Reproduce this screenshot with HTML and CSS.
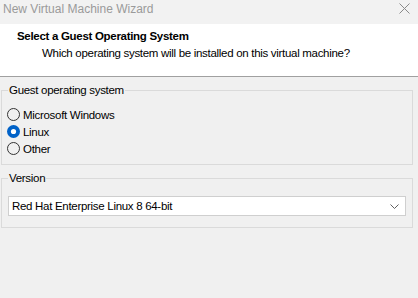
FILE: index.html
```html
<!DOCTYPE html>
<html>
<head>
<meta charset="utf-8">
<link rel="stylesheet" href="styles.css">
</head>
<body>
<div class="window">
  <div class="titlebar">
    <span class="title">New Virtual Machine Wizard</span>
    <svg class="close" width="11" height="11" viewBox="0 0 11 11"><path d="M0.5 0.5L10.5 10.5M10.5 0.5L0.5 10.5" stroke="#8a8a8a" stroke-width="1" fill="none"/></svg>
  </div>
  <div class="header">
    <div class="heading">Select a Guest Operating System</div>
    <div class="subtitle">Which operating system will be installed on this virtual machine?</div>
  </div>
  <div class="content">
    <fieldset class="group">
      <legend>Guest operating system</legend>
      <div class="radios">
        <div class="radio">
          <svg width="13" height="13" viewBox="0 0 13 13"><circle cx="6.5" cy="6.5" r="6" fill="none" stroke="#333" stroke-width="1"/></svg>
          <span>Microsoft Windows</span>
        </div>
        <div class="radio">
          <svg width="13" height="13" viewBox="0 0 13 13"><circle cx="6.5" cy="6.5" r="6.5" fill="#0062c8"/><circle cx="6.5" cy="6.5" r="2.6" fill="#fff"/></svg>
          <span>Linux</span>
        </div>
        <div class="radio">
          <svg width="13" height="13" viewBox="0 0 13 13"><circle cx="6.5" cy="6.5" r="6" fill="none" stroke="#333" stroke-width="1"/></svg>
          <span>Other</span>
        </div>
      </div>
    </fieldset>
    <fieldset class="group version">
      <legend>Version</legend>
      <div class="select">
        <span>Red Hat Enterprise Linux 8 64-bit</span>
        <svg width="9" height="5" viewBox="0 0 9 5"><path d="M0.5 0.5L4.5 4.5L8.5 0.5" stroke="#606060" stroke-width="1" fill="none"/></svg>
      </div>
    </fieldset>
  </div>
</div>
</body>
</html>
```
FILE: styles.css
```css
html, body {
  margin: 0;
  padding: 0;
}
body {
  width: 418px;
  height: 298px;
  background: #f0f0f0;
  font-family: "Liberation Sans", Arial, sans-serif;
  font-size: 11.5px;
  letter-spacing: -0.3px;
  color: #000;
  overflow: hidden;
}
.window {
  display: flex;
  flex-direction: column;
  height: 298px;
}
.titlebar {
  height: 24px;
  background: #f2f2f2;
  display: flex;
  align-items: flex-start;
  justify-content: space-between;
  padding: 2px 8px 0 3px;
  box-sizing: border-box;
}
.title {
  color: #9a9a9a;
  font-size: 12px;
  letter-spacing: 0;
  line-height: 14px;
}
.close {
  display: block;
  margin-top: 1px;
}
.header {
  height: 53px;
  box-sizing: border-box;
  background: #fff;
  border-bottom: 1px solid #a0a0a0;
  padding-top: 5px;
}
.heading {
  font-weight: bold;
  line-height: 15px;
  padding-left: 17px;
}
.subtitle {
  line-height: 15px;
  margin-top: 2px;
  padding-left: 42px;
}
.content {
  padding: 6px 5px 0 1px;
  display: flex;
  flex-direction: column;
  gap: 6px;
}
.group {
  margin: 0;
  padding: 0 6px 7px 6px;
  border: 1px solid #dadada;
  min-width: 0;
}
.group legend {
  padding: 0 1px;
  line-height: 14px;
}
.radios {
  padding-top: 9px;
  display: flex;
  flex-direction: column;
}
.radio {
  height: 17px;
  display: flex;
  align-items: center;
  gap: 3px;
  margin-left: -1px;
}
.radio svg {
  display: block;
}
.version {
  padding-bottom: 11px;
}
.select {
  margin-top: 11px;
  height: 20px;
  box-sizing: border-box;
  background: #fff;
  border: 1px solid #cfcfcf;
  display: flex;
  align-items: center;
  justify-content: space-between;
  padding: 0 6px 0 3px;
}
.select svg {
  display: block;
}
```
